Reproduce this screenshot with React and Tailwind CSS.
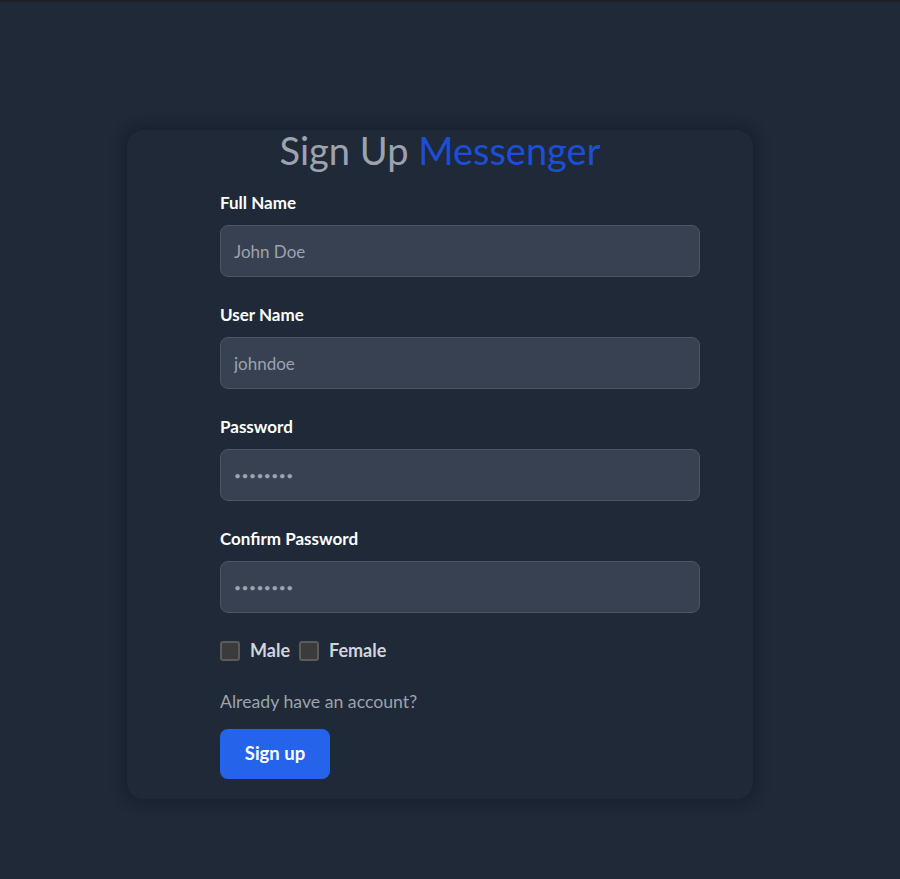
export default function App() {
  const fields = [
    { label: 'Full Name', placeholder: 'John Doe', dots: false },
    { label: 'User Name', placeholder: 'johndoe', dots: false },
    { label: 'Password', placeholder: '••••••••', dots: true },
    { label: 'Confirm Password', placeholder: '••••••••', dots: true },
  ];

  return (
    <div className="min-h-[879px] bg-[#1f2937] font-['Lato','Noto_Sans',sans-serif]">
      <div className="h-[2px] bg-[#1c2024]" />
      <div className="pt-[128px] pl-[127px]">
        <div className="w-[626px] rounded-2xl bg-[#1f2937] shadow-[0_0_12px_4px_rgba(20,26,36,0.55)] pb-[20px]">
          <h1 className="text-center text-[38px] leading-[40px] font-normal text-[#9ca3af]">
            Sign Up <span className="text-[#1d4ed8]">Messenger</span>
          </h1>
          <form className="ml-[93px] w-[480px] mt-[21px]">
            {fields.map((f) => (
              <div key={f.label} className="mb-[26px]">
                <label className="block text-[17px] leading-[24px] font-bold text-white mb-[10px]">{f.label}</label>
                <input
                  type="text"
                  placeholder={f.placeholder}
                  className={
                    f.dots
                      ? 'w-full h-[52px] rounded-lg bg-[#374151] border border-[#4b5563] px-[13px] text-[12px] tracking-[0.5px] text-gray-200 placeholder:text-[#9ca3af] outline-none'
                      : 'w-full h-[52px] rounded-lg bg-[#374151] border border-[#4b5563] px-[13px] text-[17px] text-gray-200 placeholder:text-[#9ca3af] outline-none'
                  }
                />
              </div>
            ))}
            <div className="flex items-center mt-[-2px]">
              <label className="flex items-center gap-[10px] mr-[9px]">
                <span className="w-[20px] h-[20px] rounded-[3px] border-2 border-[#5b5b5b] bg-[#3b3b3b]" />
                <span className="text-[18px] font-bold text-[#d1d5db]">Male</span>
              </label>
              <label className="flex items-center gap-[10px]">
                <span className="w-[20px] h-[20px] rounded-[3px] border-2 border-[#5b5b5b] bg-[#3b3b3b]" />
                <span className="text-[18px] font-bold text-[#d1d5db]">Female</span>
              </label>
            </div>
            <p className="mt-[26px] text-[17.7px] leading-[24px] text-[#9ca3af]">Already have an account?</p>
            <button type="button" className="mt-[15px] w-[110px] h-[50px] rounded-lg bg-[#2563eb] text-white text-[18.5px] font-bold">
              Sign up
            </button>
          </form>
        </div>
      </div>
    </div>
  );
}
